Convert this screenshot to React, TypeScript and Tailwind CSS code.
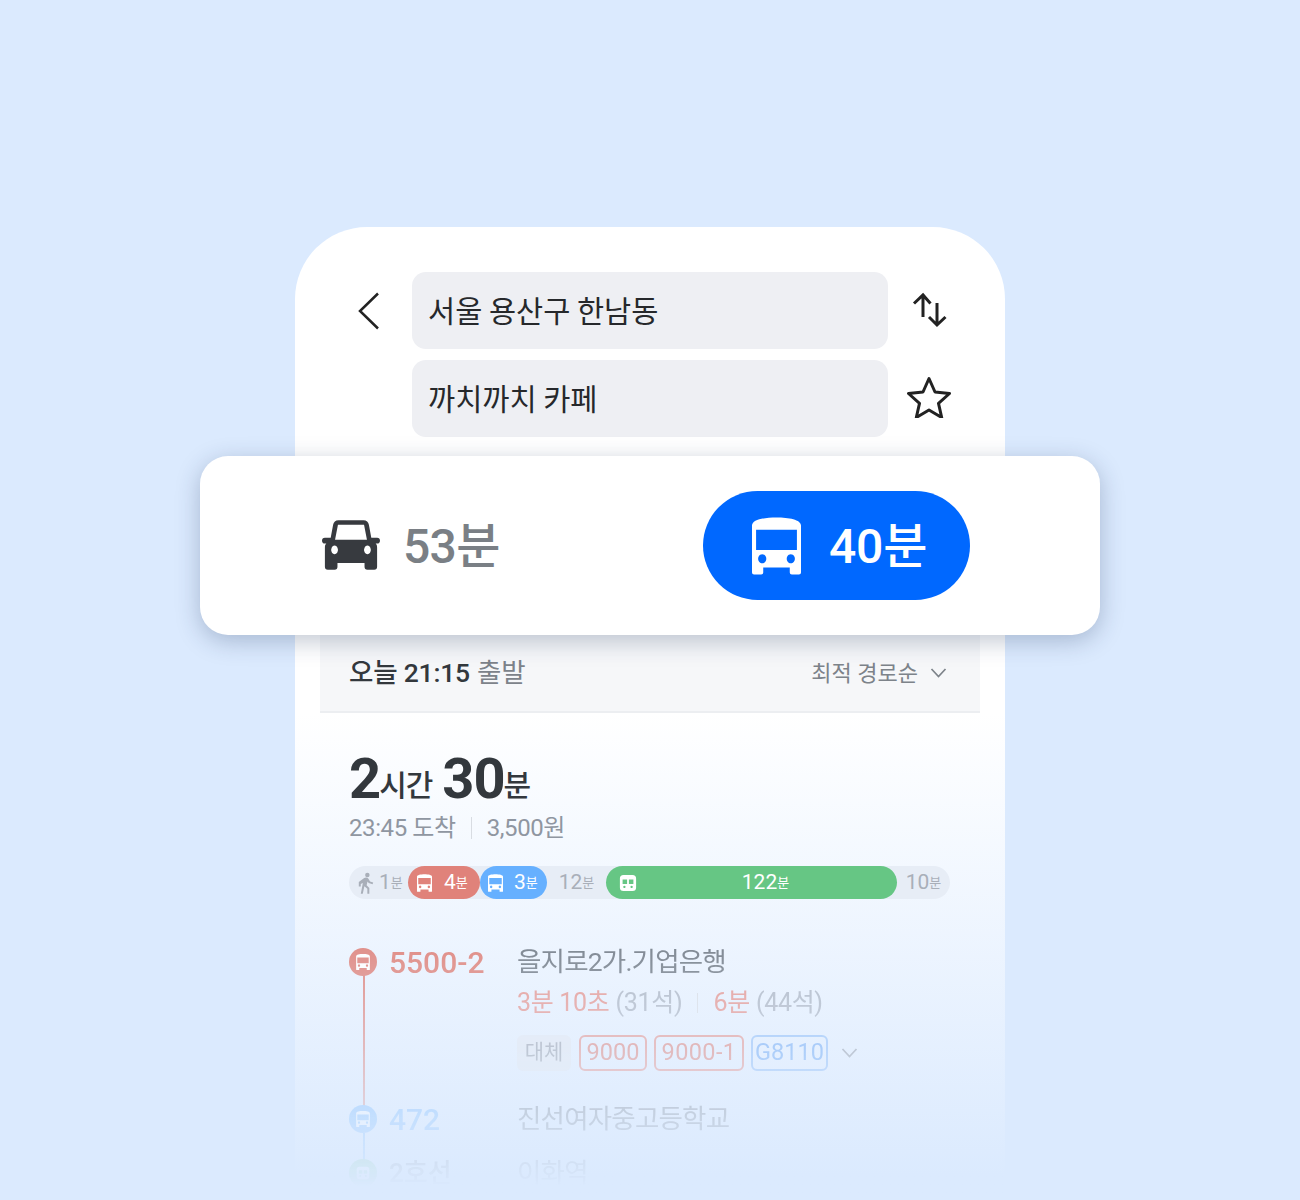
import React from 'react';

const BusIcon = ({ className }: { className?: string }) => (
  <svg viewBox="0 0 48 56" className={className} fill="currentColor">
    <path fillRule="evenodd" d="M0 8C0 2 12 0 24 0s24 2 24 8v46a2 2 0 0 1-2 2h-7a2 2 0 0 1-2-2v-5H11v5a2 2 0 0 1-2 2H2a2 2 0 0 1-2-2V8Zm4 4v20h40V12H4Zm6 24a4 4.5 0 1 0 0.01 0H10Zm28 0a4 4.5 0 1 0 0.01 0H38Z" />
  </svg>
);

const CarIcon = ({ className }: { className?: string }) => (
  <svg viewBox="0 0 60 52" className={className} fill="currentColor">
    <path fillRule="evenodd" d="M17 0h26c3 0 5 2 5.500 4.500L51 18h6c2 0 3 1 3 3 0 1.500-1 3-3 3h-1.500c1 1 1.500 2 1.500 4v20a3 3 0 0 1-3 3h-7a3 3 0 0 1-3-3v-4H16v4a3 3 0 0 1-3 3H6a3 3 0 0 1-3-3V28c0-2 .5-3 1.500-4H3c-2 0-3-1.500-3-3 0-2 1-3 3-3h6l2.500-13.500C12 2 14 0 17 0Zm-.5 4.500L13.500 20h33l-3-15.500H16.500ZM13 26a3.500 4.500 0 1 0 .01 0H13Zm34 0a3.500 4.500 0 1 0 .01 0H47Z" />
  </svg>
);

const TrainIcon = ({ className }: { className?: string }) => (
  <svg viewBox="0 0 20 20" className={className} fill="currentColor">
    <path fillRule="evenodd" d="M5 1h10a4 4 0 0 1 4 4v10a4 4 0 0 1-4 4H5a4 4 0 0 1-4-4V5a4 4 0 0 1 4-4Zm-1 5v5h5V6H4Zm7 0v5h5V6h-5ZM6 13a1.300 1.300 0 1 0 .01 0H6Zm8 0a1.300 1.300 0 1 0 .01 0H14Z" />
  </svg>
);

const WalkIcon = ({ className }: { className?: string }) => (
  <svg viewBox="0 0 20 24" className={className} fill="currentColor">
    <circle cx="11.500" cy="3" r="2.500" />
    <path d="M8 6.500c1.500-.8 3.500-.8 4.500.5l2 3.200 3.500 1.300-.7 2-4.300-1.500-1.300-1.700-1 4.200 3 3V24h-2.200v-5.500l-3.300-3-1.800 8.500H4.200l2.300-12-2.300 1.200V16H2V10.800L8 6.500Z" />
  </svg>
);

const Chevron = ({ className }: { className?: string }) => (
  <svg viewBox="0 0 16 10" className={className} fill="none" stroke="currentColor" strokeWidth="1.700">
    <path d="M1 1l7 7.500L15 1" />
  </svg>
);

const Stop = ({ color, label, title }: { color: string; label: string; title: string }) => (
  <div className="flex items-center h-[28px]">
    <div className={`w-[28px] h-[28px] rounded-full flex items-center justify-center text-white shrink-0 ${color}`}>
      <BusIcon className="w-[14px] h-[16px]" />
    </div>
    <div className={`ml-[12px] w-[128px] text-[30px] font-medium ${color === 'bg-[#de8078]' ? 'text-[#de7f76]' : 'text-[#64b0ff]'}`}>{label}</div>
    <div className="text-[26.5px] text-[#6f7883] tracking-[-0.8px]">{title}</div>
  </div>
);

const Chip = ({ children, className }: { children: React.ReactNode; className: string }) => (
  <div className={`h-[36px] rounded-[6px] border-2 flex items-center justify-center text-[23.5px] ${className}`}>
    {children}
  </div>
);

export default function App() {
  return (
    <div className="h-[1200px] overflow-hidden bg-[#dbeafe] flex flex-col items-center pt-[227px] font-['Roboto','Noto_Sans_CJK_KR',sans-serif]">
      <div className="w-[710px] shrink-0 bg-white rounded-t-[72px] pt-[45px]">
        {/* Search fields */}
        <div className="grid grid-cols-[117px_476px_82px] gap-y-[11px] items-center">
          <div className="flex justify-end pr-[31px]">
            <svg viewBox="0 0 24 38" className="w-[24px] h-[38px] text-[#222]" fill="none" stroke="currentColor" strokeWidth="2.500">
              <path d="M21 1.500L3 19l18 17.500" />
            </svg>
          </div>
          <div className="h-[77px] rounded-[14px] bg-[#eeeff3] flex items-center px-[16px] pb-[2px] text-[29.5px] text-[#26282b] font-['Noto_Sans_CJK_KR',sans-serif]">
            서울 용산구 한남동
          </div>
          <div className="flex justify-center pb-[2px]">
            <svg viewBox="0 0 36 36" className="w-[36px] h-[36px] text-[#222]" fill="none" stroke="currentColor" strokeWidth="3">
              <path d="M12 25V3M3 11.500L12 3l7.500 8.500M26 11v22M18 25l8 8 8.500-8" />
            </svg>
          </div>
          <div />
          <div className="h-[77px] rounded-[14px] bg-[#eeeff3] flex items-center px-[16px] pb-[2px] text-[29.5px] text-[#26282b] font-['Noto_Sans_CJK_KR',sans-serif]">
            까치까치 카페
          </div>
          <div className="flex justify-center pb-[4px]">
            <svg viewBox="0 0 44 42" className="w-[44px] h-[42px] text-[#222]" fill="none" stroke="currentColor" strokeWidth="3" strokeLinejoin="round">
              <path d="M22 2.500l6 13.500 14.500 1.500-11 9.800 3.200 14.200L22 34l-12.700 7.500 3.200-14.200-11-9.800L16 16 22 2.500Z" />
            </svg>
          </div>
        </div>

        {/* Mode switch card */}
        <div className="relative z-10 mt-[19px] -mx-[95px] h-[179px] bg-white rounded-[28px] shadow-[0_6px_24px_rgba(30,50,90,0.28)] flex items-center pl-[122px] pr-[130px] justify-between">
          <div className="flex items-center">
            <CarIcon className="w-[58px] h-[51px] text-[#373a3f]" />
            <span className="ml-[23px] pt-[2px] text-[48px] font-medium text-[#7a7f85] tracking-[-0.7px]">53분</span>
          </div>
          <div className="w-[267px] h-[109px] rounded-full bg-[#0068ff] flex items-center pl-[49px] text-white">
            <BusIcon className="w-[49px] h-[58px]" />
            <span className="ml-[28px] pt-[2px] text-[48px] font-medium tracking-[-0.2px]">40분</span>
          </div>
        </div>

        {/* Departure row */}
        <div className="mx-[25px] h-[78px] bg-[#f6f7f9] border-b-2 border-[#eceef1] flex items-center justify-between pl-[29px] pr-[33px]">
          <div className="text-[26.5px] tracking-[-0.2px]">
            <span className="font-medium text-[#33383d]">오늘 21:15</span>
            <span className="ml-[7px] text-[#7d838a]">출발</span>
          </div>
          <div className="flex items-center text-[22px] text-[#7d838a]">
            최적 경로순
            <Chevron className="ml-[12px] w-[17px] h-[10px]" />
          </div>
        </div>

        {/* Route summary, background fades into the page */}
        <div className="h-[488px] px-[54px] pt-[38px] bg-gradient-to-b from-white to-[#dbeafe] to-95%">
          <div className="flex items-baseline h-[60px] text-[#33383d] font-bold leading-none">
            <span className="text-[56px] tracking-[-1px]">2</span>
            <span className="-ml-[1px] -translate-y-[2px] text-[30px] font-medium tracking-[-1px]">시간</span>
            <span className="ml-[10px] text-[56px] tracking-[-1px]">30</span>
            <span className="-ml-[1px] -translate-y-[2px] text-[30px] font-medium">분</span>
          </div>
          <div className="flex items-center h-[34px] text-[24px] text-[#8f96a1] tracking-[-0.4px]">
            <span>23:45 도착</span>
            <span className="mx-[15px] w-[1px] h-[22px] bg-[#d8dce2]" />
            <span>3,500원</span>
          </div>

          {/* Segment bar */}
          <div className="mt-[21px] h-[33px] w-[601px] rounded-full bg-[#e7edf6] flex items-center text-[#a9afb9]">
            <div className="w-[59px] flex items-center pl-[8px]">
              <WalkIcon className="w-[18px] h-[22px]" />
              <span className="ml-[4px] text-[21px] leading-none">1</span>
              <span className="text-[13px]">분</span>
            </div>
            <div className="w-[72px] h-[33px] rounded-full bg-[#e0827a] text-white flex items-center pl-[9px]">
              <BusIcon className="w-[15px] h-[18px]" />
              <span className="ml-[12px] text-[21px] leading-none">4</span>
              <span className="text-[13px]">분</span>
            </div>
            <div className="w-[67px] h-[33px] rounded-full bg-[#66b0ff] text-white flex items-center pl-[8px]">
              <BusIcon className="w-[15px] h-[18px]" />
              <span className="ml-[11px] text-[21px] leading-none">3</span>
              <span className="text-[13px]">분</span>
            </div>
            <div className="w-[59px] flex items-center justify-center">
              <span className="text-[21px] leading-none">12</span>
              <span className="text-[13px]">분</span>
            </div>
            <div className="relative w-[291px] h-[33px] rounded-full bg-[#66c684] text-white flex items-center justify-center pl-[28px]">
              <TrainIcon className="absolute left-[13px] w-[18px] h-[18px]" />
              <span className="text-[21px] leading-none">122</span>
              <span className="text-[13px]">분</span>
            </div>
            <div className="flex-1 flex items-center justify-center">
              <span className="text-[21px] leading-none">10</span>
              <span className="text-[13px]">분</span>
            </div>
          </div>

          {/* Timeline, fades out downward */}
          <div className="relative mt-[49px] [mask-image:linear-gradient(to_bottom,rgba(0,0,0,0.85)_0%,rgba(0,0,0,0.22)_71%,rgba(0,0,0,0.05)_94%,transparent_100%)]">
            <div className="absolute left-[14px] top-[24px] w-[2px] h-[140px] bg-[#de8078]" />
            <div className="absolute left-[14px] top-[185px] w-[2px] h-[30px] bg-[#64b0ff]" />
            <div className="relative">
              <Stop color="bg-[#de8078]" label="5500-2" title="을지로2가.기업은행" />
              <div className="ml-[168px] mt-[11px] flex items-center h-[32px] text-[25px] tracking-[-0.3px] text-[#a9b2c0]">
                <span className="text-[#e58f88]">3분 10초</span>
                <span className="ml-[6px]">(31석)</span>
                <span className="mx-[15px] w-[1px] h-[20px] bg-[#d8dce2]" />
                <span className="text-[#e58f88]">6분</span>
                <span className="ml-[6px]">(44석)</span>
              </div>
              <div className="ml-[168px] mt-[16px] flex items-center gap-[7px]">
                <div className="h-[36px] w-[54px] rounded-[6px] bg-[#e3e8f1] flex items-center justify-center text-[21px] text-[#949ba7] mr-[1px]">대체</div>
                <Chip className="w-[68px] border-[#e59089] text-[#de7f76]">9000</Chip>
                <Chip className="w-[90px] border-[#e59089] text-[#de7f76] tracking-[0.4px]">9000-1</Chip>
                <Chip className="w-[77px] border-[#8fbdf8] text-[#6fa9f5]">G8110</Chip>
                <Chevron className="ml-[6px] w-[17px] h-[10px] text-[#949ba7]" />
              </div>
              <div className="mt-[34px]">
                <Stop color="bg-[#64b0ff]" label="472" title="진선여자중고등학교" />
              </div>
              <div className="mt-[26px] flex items-center h-[28px]">
                <div className="w-[28px] h-[28px] rounded-full bg-[#66c684] flex items-center justify-center text-white shrink-0">
                  <TrainIcon className="w-[14px] h-[14px]" />
                </div>
                <div className="ml-[12px] w-[128px] text-[26px] font-medium text-[#6f7883]">2호선</div>
                <div className="text-[26.5px] text-[#6f7883] tracking-[-0.8px]">이화역</div>
              </div>
            </div>
          </div>
        </div>
      </div>
    </div>
  );
}
